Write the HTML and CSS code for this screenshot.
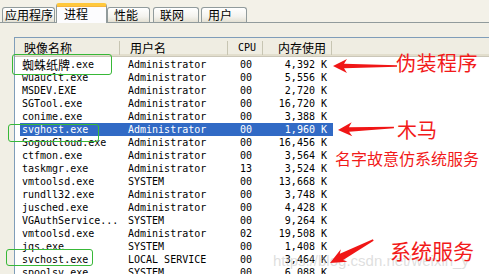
FILE: index.html
```html
<!DOCTYPE html>
<html lang="zh-CN">
<head>
  <meta charset="UTF-8" />
  <title>Windows 任务管理器 - 进程</title>
  <link rel="stylesheet" href="styles.css">
</head>
<body>
  <div class="window">
    <div class="tabs">
      <div class="tab t1">应用程序</div>
      <div class="tab active">进程</div>
      <div class="tab t3">性能</div>
      <div class="tab t4">联网</div>
      <div class="tab t5">用户</div>
    </div>

    <div class="panel">
      <div class="list">
        <div class="head">
          <div class="hcell h-name">映像名称</div>
          <div class="hcell h-user">用户名</div>
          <div class="hcell h-cpu">CPU</div>
          <div class="hcell h-mem">内存使用</div>
          <div class="hcell h-fill"></div>
        </div>

        <div class="rows">
          <div class="row"><span class="name"><span class="cjk">蜘蛛纸牌</span>.exe</span><span class="user">Administrator</span><span class="cpu">00</span><span class="mem">4,392 K</span></div>
          <div class="row"><span class="name">wuauclt.exe</span><span class="user">Administrator</span><span class="cpu">00</span><span class="mem">5,556 K</span></div>
          <div class="row"><span class="name">MSDEV.EXE</span><span class="user">Administrator</span><span class="cpu">00</span><span class="mem">2,720 K</span></div>
          <div class="row"><span class="name">SGTool.exe</span><span class="user">Administrator</span><span class="cpu">00</span><span class="mem">16,720 K</span></div>
          <div class="row"><span class="name">conime.exe</span><span class="user">Administrator</span><span class="cpu">00</span><span class="mem">3,388 K</span></div>
          <div class="row selected"><span class="name">svghost.exe</span><span class="user">Administrator</span><span class="cpu">00</span><span class="mem">1,960 K</span></div>
          <div class="row"><span class="name">SogouCloud.exe</span><span class="user">Administrator</span><span class="cpu">00</span><span class="mem">16,456 K</span></div>
          <div class="row"><span class="name">ctfmon.exe</span><span class="user">Administrator</span><span class="cpu">00</span><span class="mem">3,564 K</span></div>
          <div class="row"><span class="name">taskmgr.exe</span><span class="user">Administrator</span><span class="cpu">13</span><span class="mem">3,524 K</span></div>
          <div class="row"><span class="name">vmtoolsd.exe</span><span class="user">SYSTEM</span><span class="cpu">00</span><span class="mem">13,668 K</span></div>
          <div class="row"><span class="name">rundll32.exe</span><span class="user">Administrator</span><span class="cpu">00</span><span class="mem">3,748 K</span></div>
          <div class="row"><span class="name">jusched.exe</span><span class="user">Administrator</span><span class="cpu">00</span><span class="mem">4,428 K</span></div>
          <div class="row"><span class="name">VGAuthService...</span><span class="user">SYSTEM</span><span class="cpu">00</span><span class="mem">9,264 K</span></div>
          <div class="row"><span class="name">vmtoolsd.exe</span><span class="user">Administrator</span><span class="cpu">02</span><span class="mem">19,508 K</span></div>
          <div class="row"><span class="name">jqs.exe</span><span class="user">SYSTEM</span><span class="cpu">00</span><span class="mem">1,408 K</span></div>
          <div class="row"><span class="name">svchost.exe</span><span class="user">LOCAL SERVICE</span><span class="cpu">00</span><span class="mem">3,464 K</span></div>
          <div class="row"><span class="name">spoolsv.exe</span><span class="user">SYSTEM</span><span class="cpu">00</span><span class="mem">6,088 K</span></div>
        </div>
      </div>
    </div>
  </div>

  <!-- annotations drawn over the screenshot -->
  <div class="marks">
    <div class="box box-1"></div>
    <div class="box box-2"></div>
    <div class="box box-3"></div>

    <div class="watermark">https://blog.csdn.net/weixin_y</div>

    <div class="label label-fake">伪装程序</div>
    <div class="label label-trojan">木马</div>
    <div class="label label-note">名字故意仿系统服务</div>
    <div class="label label-sys">系统服务</div>

    <svg class="arrows" width="489" height="274" viewBox="0 0 489 274">
      <g fill="#f01616">
        <polygon transform="translate(333 66)" points="0,0 14,-7 11,-2.2 64,-0.7 64,0.7 11,2.2 14,7" />
        <polygon transform="translate(338 130) rotate(-2.6)" points="0,0 14,-7 11,-2.2 56,-0.7 56,0.7 11,2.2 14,7" />
        <polygon transform="translate(330 263) rotate(-28)" points="0,0 16,-7 13,-3.5 49,-0.8 49,0.8 13,3.5 16,7" />
      </g>
    </svg>
  </div>
</body>
</html>
```

FILE: styles.css
```css
/* XP task manager look */
body {
  margin: 0;
  width: 489px;
  height: 274px;
  overflow: hidden;
  position: relative;
  background: #ece9d8;
  font-family: "Noto Sans CJK SC", sans-serif;
  color: #000;
}

.window {
  display: flex;
  flex-direction: column;
  height: 274px;
}

/* tabs */
.tabs {
  display: flex;
  align-items: flex-end;
  height: 22px;
  padding-left: 2px;
  border-bottom: 1px solid #919b9c;
  background: #f3f1e8;
}

.tab {
  box-sizing: border-box;
  height: 15px;
  padding-left: 6px;
  font-size: 12px;
  line-height: 14px;
  border: 1px solid #919b9c;
  border-bottom: none;
  border-radius: 3px 3px 0 0;
  background: linear-gradient(#ffffff, #f4f3ee 60%, #e3e0d3);
  white-space: nowrap;
}

.tab.t1 {
  width: 53px;
  padding-left: 2px;
}

.tab.active {
  width: 51px;
  height: 20px;
  margin-left: 1px;
  margin-bottom: -1px;
  padding-left: 7px;
  line-height: 16px;
  background: #fcfcfe;
  border-top: 3px solid #ffc83c;
  box-shadow: inset 0 1px 0 #f5b53f;
}

.tab.t3 { width: 43px; }
.tab.t4 { width: 46px; margin-left: 3px; }
.tab.t5 { width: 46px; margin-left: 2px; }

/* panel + list */
.panel {
  flex: 1;
  background: #f1efe5;
  padding: 14px 0 0 14px;
  overflow: hidden;
}

.list {
  height: 100%;
  background: #fff;
  border-top: 1px solid #7f9db9;
  border-left: 1px solid #7f9db9;
}

.head {
  display: flex;
  height: 15px;
  padding: 3px 0 0;
  background: #efede2;
  border-bottom: 1px solid #cbc7b8;
  box-shadow: inset 0 -2px 0 #e2decd;
  font-size: 12px;
  line-height: 14px;
}

.hcell {
  box-sizing: border-box;
  height: 14px;
  border-right: 1px solid #c7c5b2;
  white-space: nowrap;
}

.h-name { width: 105px; padding-left: 9px; }
.h-user { width: 108px; padding-left: 10px; }
.h-cpu {
  width: 35px;
  padding-left: 10px;
  font-family: "DejaVu Sans Mono", monospace;
  font-size: 10px;
}
.h-mem { width: 69px; padding-right: 5px; text-align: right; }
.h-fill { flex: 1; border-right: none; }

.rows {
  padding-top: 1px;
  font-family: "DejaVu Sans Mono", "Noto Sans CJK SC", monospace;
  font-size: 10px;
}

.row {
  display: grid;
  grid-template-columns: 100px 108px 35px 70px;
  width: 313px;
  height: 13px;
  margin-left: 5px;
  line-height: 13px;
  white-space: nowrap;
}

.row.selected {
  background: #316ac5;
  color: #fff;
}

.row .name { padding-left: 2px; }
.row .user { padding-left: 8px; }
.row .cpu { padding-left: 12px; }
.row .mem { padding-right: 6px; text-align: right; }

.cjk {
  font-family: "Noto Sans CJK SC", sans-serif;
  font-size: 12px;
  line-height: 13px;
  vertical-align: top;
}

/* annotation layer */
.marks {
  position: absolute;
  inset: 0;
  pointer-events: none;
}

.box {
  position: absolute;
  box-sizing: border-box;
  border: 1px solid #38b838;
  border-radius: 3px;
}

.box-1 { left: 12px; top: 54px; width: 100px; height: 21px; }
.box-2 { left: 8px; top: 124px; width: 91px; height: 18px; }
.box-3 { left: 6px; top: 249px; width: 87px; height: 17px; }

.label {
  position: absolute;
  color: #f21a1a;
  line-height: 1;
  white-space: nowrap;
}

.label-fake { left: 396px; top: 53px; font-size: 20px; letter-spacing: 0.5px; }
.label-trojan { left: 397px; top: 120px; font-size: 20px; }
.label-note { left: 335px; top: 150px; font-size: 16px; }
.label-sys { left: 390px; top: 240px; font-size: 21px; }

.watermark {
  position: absolute;
  left: 273px;
  top: 252px;
  font-family: "Liberation Sans", sans-serif;
  font-size: 15px;
  color: rgba(190, 190, 190, 0.5);
  white-space: nowrap;
}

.arrows {
  position: absolute;
  left: 0;
  top: 0;
}
```
